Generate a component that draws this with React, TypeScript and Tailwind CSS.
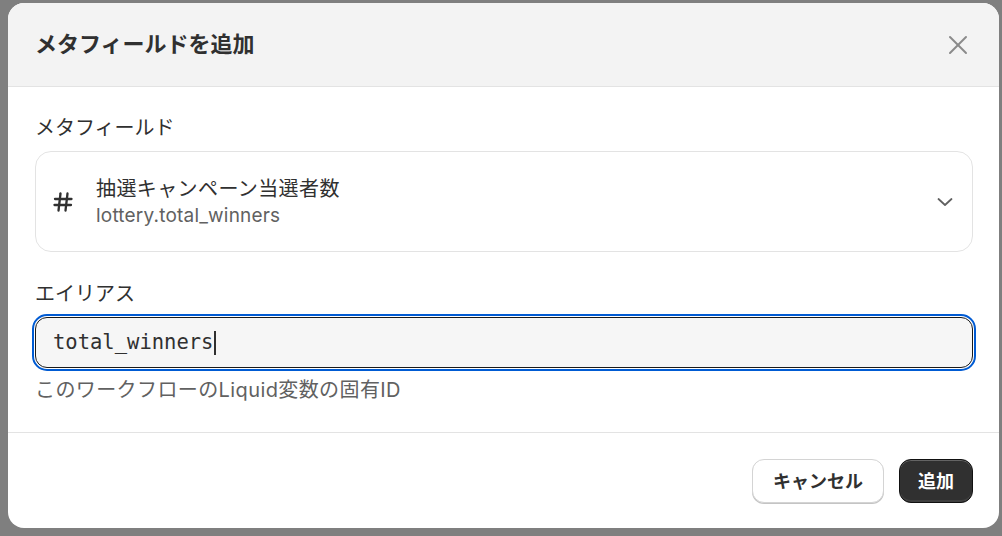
const font = { fontFamily: '"Inter", "Noto Sans CJK JP", sans-serif' };

function HashIcon() {
  return (
    <svg width="22" height="22" viewBox="0 0 22 22" fill="none" stroke="#303030" strokeWidth="2.3" strokeLinecap="round">
      <path d="M8.5 2.5 L6.5 19.5" />
      <path d="M15.5 2.5 L13.5 19.5" />
      <path d="M3 8 H19.5" />
      <path d="M2.5 14 H19" />
    </svg>
  );
}

function CloseIcon() {
  return (
    <svg width="20" height="20" viewBox="0 0 20 20" fill="none" stroke="#8a8a8a" strokeWidth="2" strokeLinecap="round">
      <path d="M2 2 L18 18" />
      <path d="M18 2 L2 18" />
    </svg>
  );
}

function ChevronDown() {
  return (
    <svg width="18" height="18" viewBox="0 0 18 18" fill="none" stroke="#616161" strokeWidth="1.8" strokeLinecap="round" strokeLinejoin="round">
      <path d="M2.5 6 L9 12 L15.5 6" />
    </svg>
  );
}

export default function App() {
  return (
    <div className="w-[1002px] h-[536px] bg-[#7f7f7f] pl-[8px] pt-[3px] pr-[3px] pb-[8px]" style={font}>
      <div className="h-[525px] w-[991px] bg-white rounded-[16px] overflow-hidden flex flex-col">
        {/* ヘッダー */}
        <div className="h-[84px] shrink-0 bg-[#f3f3f3] border-b border-[#e3e3e3] flex items-center justify-between pl-[27px] pr-[31px]">
          <h1 className="text-[22px] font-bold text-[#303030]">メタフィールドを追加</h1>
          <button className="w-[20px] h-[20px] flex items-center justify-center">
            <CloseIcon />
          </button>
        </div>

        {/* 本文 */}
        <div className="pl-[27px] pr-[26px] pt-[27px] pb-[28px] border-b border-[#e3e3e3]">
          <div className="text-[20px] leading-[28px] text-[#303030]">メタフィールド</div>
          <div className="mt-[9px] h-[101px] border border-[#e3e3e3] rounded-[16px] flex items-center pl-[16px] pr-[18px]">
            <HashIcon />
            <div className="ml-[22px] flex-1 flex flex-col">
              <span className="text-[20px] leading-[28px] text-[#303030] tracking-[0.4px]">抽選キャンペーン当選者数</span>
              <span className="text-[19px] leading-[24px] text-[#616161] mt-[1px] tracking-[0.2px]">lottery.total_winners</span>
            </div>
            <ChevronDown />
          </div>

          <div className="mt-[28px] text-[20px] leading-[28px] text-[#303030]">エイリアス</div>
          <div className="mt-[9px] h-[51px] rounded-[12px] border border-[#1a1a1a] bg-[#f6f6f6] outline-2 outline-[#005bd3] outline-offset-1 flex items-center px-[17px]">
            <span className="text-[20.5px] text-[#303030]" style={{ fontFamily: '"DejaVu Sans Mono", monospace' }}>total_winners</span>
            <span className="w-[2px] h-[24px] bg-[#303030] ml-[1px]" />
          </div>
          <div className="mt-[8px] text-[20px] leading-[28px] text-[#616161] tracking-[0.4px]">このワークフローのLiquid変数の固有ID</div>
        </div>

        {/* フッター */}
        <div className="flex-1 flex items-start justify-end gap-[15px] pt-[26px] pr-[26px]">
          <button className="h-[44px] w-[132px] rounded-[12px] bg-white border border-[#d4d4d4] shadow-[0_1px_0_#c4c4c4] text-[18px] font-semibold text-[#303030]">
            キャンセル
          </button>
          <button className="h-[44px] w-[74px] rounded-[12px] bg-[#303030] border border-[#111] shadow-[inset_0_1px_0_rgba(255,255,255,0.25),inset_0_-2px_0_rgba(255,255,255,0.08)] text-[18px] font-semibold text-white">
            追加
          </button>
        </div>
      </div>
    </div>
  );
}
